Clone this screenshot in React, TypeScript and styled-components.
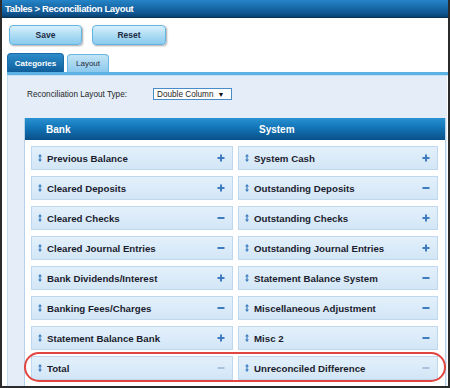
import { Fragment } from "react";
import styled, { createGlobalStyle } from "styled-components";

const GlobalStyle = createGlobalStyle`
    html, body {
        margin: 0;
        padding: 0;
        background: #ffffff;
    }
    * {
        box-sizing: border-box;
    }
`;

const Frame = styled.div`
    position: relative;
    width: 450px;
    height: 388px;
    display: flex;
    flex-direction: column;
    background: #ffffff;
    border-left: 2px solid #2b2b2b;
    border-right: 2px solid #2b2b2b;
    border-bottom: 2px solid #2b2b2b;
    font-family: "Liberation Sans", Arial, sans-serif;
    overflow: hidden;
`;

const TitleBar = styled.div`
    height: 18px;
    flex: none;
    display: flex;
    align-items: center;
    padding-left: 3px;
    background: linear-gradient(#2584c8, #0f5590 80%, #0a3f6c);
    border-bottom: 1px solid #08345a;
    color: #ffffff;
    font-size: 9.5px;
    font-weight: bold;
    letter-spacing: -0.35px;
`;

const ButtonRow = styled.div`
    display: flex;
    gap: 10px;
    padding: 7px 0 0 7px;
`;

const ActionButton = styled.button<{ $w: number }>`
    width: ${(p) => p.$w}px;
    height: 20px;
    border: 1px solid #62b4e2;
    border-radius: 4px;
    background: linear-gradient(#d8f0fc, #a6d8f2 60%, #8ccbee);
    box-shadow: 1px 1px 2px rgba(0, 0, 0, 0.35);
    font-family: "Liberation Sans", Arial, sans-serif;
    font-size: 8.5px;
    font-weight: bold;
    color: #1d2b44;
    padding: 0;
`;

const Tabs = styled.div`
    display: flex;
    align-items: flex-end;
    gap: 3px;
    margin-top: 8px;
    padding-left: 5px;
    height: 19px;
`;

const Tab = styled.div<{ $active?: boolean; $w: number }>`
    width: ${(p) => p.$w}px;
    height: ${(p) => (p.$active ? 19 : 18)}px;
    display: flex;
    align-items: center;
    justify-content: center;
    border-radius: 4px 4px 0 0;
    font-size: 8px;
    font-weight: ${(p) => (p.$active ? "bold" : "normal")};
    color: ${(p) => (p.$active ? "#ffffff" : "#1f2a3a")};
    background: ${(p) =>
        p.$active
            ? "linear-gradient(#2d8ccb, #0f5e9a)"
            : "linear-gradient(#c4e4f6, #8cc8ec)"};
    border: 1px solid ${(p) => (p.$active ? "#1a6aa6" : "#6ab6e2")};
    border-bottom: none;
`;

const TabLine = styled.div`
    height: 4px;
    flex: none;
    margin-left: 5px;
    background: #5cb2e2;
    border-bottom: 1px solid #c6e0f3;
`;

const Panel = styled.div`
    flex: 1;
    margin-left: 5px;
    margin-right: 1px;
    display: flex;
    flex-direction: column;
    background: #e5eef8;
    border-left: 1px solid #c4dbef;
`;

const TypeRow = styled.div`
    display: flex;
    align-items: center;
    margin-top: 12px;
    padding-left: 19px;
    height: 12px;
    font-size: 8.2px;
    color: #1e1e1e;
`;

const TypeLabel = styled.span`
    width: 126px;
`;

const Select = styled.div`
    width: 79px;
    height: 12px;
    display: flex;
    align-items: center;
    gap: 4px;
    padding: 0 3px;
    background: #ffffff;
    border: 1px solid #4a8cc8;
    font-size: 8.2px;
    color: #1e1e1e;
`;

const Arrow = styled.span`
    font-size: 7px;
    color: #111111;
`;

const Table = styled.div`
    margin: 18px 1px 0 16px;
    flex: 1;
    display: flex;
    flex-direction: column;
    border-left: 1px solid #b6d2ea;
    border-right: 1px solid #b6d2ea;
    background: #ffffff;
`;

const TableHeader = styled.div`
    height: 22px;
    flex: none;
    display: grid;
    grid-template-columns: 1fr 1fr;
    align-items: center;
    background: linear-gradient(#2891d2, #1274b6 45%, #0a4f88);
    color: #ffffff;
    font-size: 10px;
    font-weight: bold;
`;

const HeaderCell = styled.div<{ $pad: number }>`
    padding-left: ${(p) => p.$pad}px;
`;

const TableBody = styled.div`
    display: grid;
    grid-template-columns: 202px 200px;
    column-gap: 5px;
    row-gap: 6px;
    padding: 6px 6px 4px 6px;
`;

const Item = styled.div`
    height: 24px;
    display: flex;
    align-items: center;
    padding: 0 7px 0 6px;
    background: linear-gradient(#e3f0fb, #d3e6f6);
    border: 1px solid #bfd8ee;
    font-size: 9.7px;
    font-weight: bold;
    color: #1b1d2e;
`;

const Label = styled.span`
    flex: 1;
    margin-left: 5px;
    white-space: nowrap;
`;

const Oval = styled.div`
    position: absolute;
    left: 22px;
    top: 352px;
    width: 422px;
    height: 30px;
    border: 2px solid #e2443f;
    border-radius: 15px;
    pointer-events: none;
`;

const SortIcon = () => (
    <svg width="4" height="8" viewBox="0 0 4 8">
        <path d="M2 0 L4 2.6 L0 2.6 Z M2 8 L4 5.4 L0 5.4 Z M1.4 2.4 H2.6 V5.6 H1.4 Z" fill="#3f7fc0" />
    </svg>
);

const SignIcon = ({ sign, faded }: { sign: "+" | "-"; faded?: boolean }) => {
    const c = faded ? "#a9c3de" : "#3f7cbf";
    return (
        <svg width="8" height="8" viewBox="0 0 8 8">
            <rect x="0.5" y="3" width="7" height="2" fill={c} />
            {sign === "+" && <rect x="3" y="0.5" width="2" height="7" fill={c} />}
        </svg>
    );
};

type Row = { label: string; sign: "+" | "-"; faded?: boolean };

const bank: Row[] = [
    { label: "Previous Balance", sign: "+" },
    { label: "Cleared Deposits", sign: "+" },
    { label: "Cleared Checks", sign: "-" },
    { label: "Cleared Journal Entries", sign: "-" },
    { label: "Bank Dividends/Interest", sign: "+" },
    { label: "Banking Fees/Charges", sign: "-" },
    { label: "Statement Balance Bank", sign: "+" },
    { label: "Total", sign: "-", faded: true },
];

const system: Row[] = [
    { label: "System Cash", sign: "+" },
    { label: "Outstanding Deposits", sign: "-" },
    { label: "Outstanding Checks", sign: "+" },
    { label: "Outstanding Journal Entries", sign: "+" },
    { label: "Statement Balance System", sign: "-" },
    { label: "Miscellaneous Adjustment", sign: "-" },
    { label: "Misc 2", sign: "-" },
    { label: "Unreconciled Difference", sign: "-", faded: true },
];

const ItemBox = ({ row }: { row: Row }) => (
    <Item>
        <SortIcon />
        <Label>{row.label}</Label>
        <SignIcon sign={row.sign} faded={row.faded} />
    </Item>
);

export default function App() {
    return (
        <>
            <GlobalStyle />
            <Frame>
                <TitleBar>Tables &gt; Reconciliation Layout</TitleBar>
                <ButtonRow>
                    <ActionButton $w={73}>Save</ActionButton>
                    <ActionButton $w={74}>Reset</ActionButton>
                </ButtonRow>
                <Tabs>
                    <Tab $active $w={57}>Categories</Tab>
                    <Tab $w={42}>Layout</Tab>
                </Tabs>
                <TabLine />
                <Panel>
                    <TypeRow>
                        <TypeLabel>Reconciliation Layout Type:</TypeLabel>
                        <Select>
                            Double Column <Arrow>▼</Arrow>
                        </Select>
                    </TypeRow>
                    <Table>
                        <TableHeader>
                            <HeaderCell $pad={21}>Bank</HeaderCell>
                            <HeaderCell $pad={24}>System</HeaderCell>
                        </TableHeader>
                        <TableBody>
                            {bank.map((b, i) => (
                                <Fragment key={i}>
                                    <ItemBox row={b} />
                                    <ItemBox row={system[i]} />
                                </Fragment>
                            ))}
                        </TableBody>
                    </Table>
                </Panel>
                <Oval />
            </Frame>
        </>
    );
}
